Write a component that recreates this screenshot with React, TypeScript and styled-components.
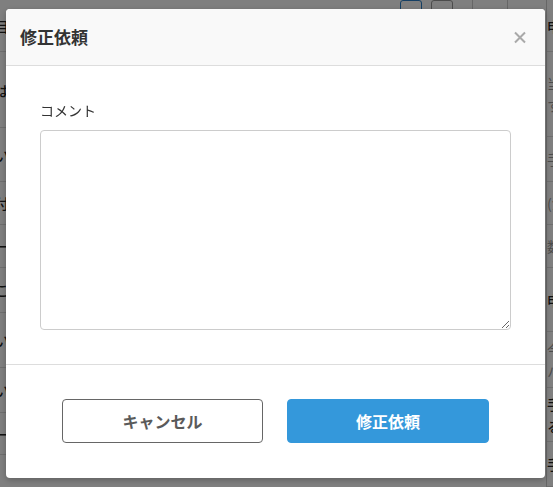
import React from "react";
import styled, { createGlobalStyle } from "styled-components";

const GlobalStyle = createGlobalStyle`
  html, body { margin: 0; padding: 0; }
  body {
    font-family: "Noto Sans CJK JP", "Noto Sans", sans-serif;
    color: #333;
    background: #fff;
  }
  * { box-sizing: border-box; }
`;

const Page = styled.div`
  display: flex;
  height: 487px;
  overflow: hidden;
  background: #fff;
`;

const SideCol = styled.div<{ $side: "left" | "right"; $w: number }>`
  width: ${(p) => p.$w}px;
  flex: none;
  display: flex;
  flex-direction: column;
  overflow: hidden;
  ${(p) => (p.$side === "left" ? "" : "border-left: 1px solid #ccc;")}
`;

const Row = styled.div<{ $h: number; $side: "left" | "right"; $dark?: boolean }>`
  height: ${(p) => p.$h}px;
  flex: none;
  display: flex;
  flex-direction: column;
  justify-content: center;
  align-items: ${(p) => (p.$side === "left" ? "flex-end" : "flex-start")};
  border-bottom: 1px solid #ddd;
  font-size: 14px;
  line-height: 22px;
  white-space: nowrap;
  color: ${(p) => (p.$dark ? "#222" : "#999")};
  font-weight: ${(p) => (p.$dark ? 500 : 400)};
`;

const Center = styled.div`
  flex: 1;
  display: flex;
  flex-direction: column;
`;

const TopBar = styled.div`
  height: 20px;
  display: flex;
  justify-content: flex-end;
  align-items: flex-end;
`;

const MiniBox = styled.div<{ $blue?: boolean }>`
  width: 22px;
  height: 20px;
  border: 1px solid ${(p) => (p.$blue ? "#2a7fc8" : "#999")};
  border-radius: 3px;
  margin-right: 9px;
`;

const TopCell = styled.div<{ $w: number; $gap?: number }>`
  width: ${(p) => p.$w}px;
  height: 20px;
  margin-left: ${(p) => p.$gap ?? 0}px;
  border-left: 1px solid #ccc;
`;

const Overlay = styled.div`
  position: fixed;
  inset: 0;
  background: rgba(0, 0, 0, 0.5);
  padding: 9px 0 0 6px;
`;

const Modal = styled.div`
  width: 539px;
  height: 469px;
  background: #fff;
  border-radius: 4px;
  overflow: hidden;
  display: flex;
  flex-direction: column;
  box-shadow: 0 2px 6px rgba(0, 0, 0, 0.25);
`;

const Header = styled.div`
  height: 57px;
  flex: none;
  display: flex;
  align-items: center;
  justify-content: space-between;
  padding: 0 19px 0 14px;
  background: #f9f9f9;
  border-bottom: 1px solid #ddd;
`;

const Title = styled.h2`
  margin: 0;
  font-size: 17px;
  font-weight: 700;
  color: #333;
  line-height: 24px;
`;

const CloseButton = styled.button`
  width: 12px;
  height: 13px;
  padding: 0;
  border: none;
  background: none;
  display: flex;
  cursor: pointer;
`;

const Body = styled.div`
  height: 299px;
  flex: none;
  padding: 34px 34px 0 34px;
  border-bottom: 1px solid #ddd;
  display: flex;
  flex-direction: column;
`;

const Label = styled.label`
  font-size: 14px;
  line-height: 20px;
  color: #333;
  margin-bottom: 10px;
`;

const TextArea = styled.textarea`
  width: 471px;
  height: 200px;
  flex: none;
  border: 1px solid #ccc;
  border-radius: 4px;
  padding: 8px;
  font-family: inherit;
  font-size: 14px;
  outline: none;
`;

const Footer = styled.div`
  flex: 1;
  display: flex;
  justify-content: center;
  align-items: flex-start;
  gap: 24px;
  padding-top: 34px;
`;

const Button = styled.button<{ $primary?: boolean }>`
  width: ${(p) => (p.$primary ? 202 : 201)}px;
  height: 44px;
  border-radius: 4px;
  font-family: inherit;
  font-size: 16px;
  font-weight: 700;
  cursor: pointer;
  border: 1px solid ${(p) => (p.$primary ? "#3498db" : "#666")};
  background: ${(p) => (p.$primary ? "#3498db" : "#fff")};
  color: ${(p) => (p.$primary ? "#fff" : "#5a5a5a")};
`;

type RowData = { h: number; lines: string[]; dark?: boolean };

const leftRows: RowData[] = [
  { h: 52, lines: ["項目"], dark: true },
  { h: 76, lines: ["内容は"], dark: true },
  { h: 54, lines: ["ない"], dark: true },
  { h: 43, lines: ["添付"], dark: true },
  { h: 43, lines: ["ー"], dark: true },
  { h: 45, lines: ["こ"], dark: true },
  { h: 55, lines: ["ない"], dark: true },
  { h: 45, lines: ["ない"], dark: true },
  { h: 42, lines: ["ー"], dark: true },
  { h: 40, lines: [""] },
];

const rightRows: RowData[] = [
  { h: 52, lines: ["申請"], dark: true },
  { h: 85, lines: ["当該", "す"] },
  { h: 45, lines: ["手続"] },
  { h: 43, lines: ["(注"] },
  { h: 43, lines: ["数量"] },
  { h: 64, lines: ["申請"], dark: true },
  { h: 56, lines: ["今回", "ハ"] },
  { h: 54, lines: ["手続", "る"], dark: true },
  { h: 45, lines: ["手続"], dark: true },
];

const CloseIcon = () => (
  <svg width="12" height="13" viewBox="0 0 12 13">
    <path d="M1 1.5 L11 11.5 M11 1.5 L1 11.5" stroke="#a9a9a9" strokeWidth="2" />
  </svg>
);

export default function App() {
  return (
    <>
      <GlobalStyle />
      <Page>
        <SideCol $side="left" $w={9}>
          {leftRows.map((r, i) => (
            <Row key={i} $h={r.h} $side="left" $dark={r.dark}>
              {r.lines.map((l, j) => (
                <span key={j}>{l}</span>
              ))}
            </Row>
          ))}
        </SideCol>
        <Center>
          <TopBar>
            <MiniBox $blue />
            <MiniBox />
            <TopCell $w={35} $gap={10} />
            <TopCell $w={39} />
          </TopBar>
        </Center>
        <SideCol $side="right" $w={7}>
          {rightRows.map((r, i) => (
            <Row key={i} $h={r.h} $side="right" $dark={r.dark}>
              {r.lines.map((l, j) => (
                <span key={j}>{l}</span>
              ))}
            </Row>
          ))}
        </SideCol>
      </Page>
      <Overlay>
        <Modal role="dialog">
          <Header>
            <Title>修正依頼</Title>
            <CloseButton aria-label="閉じる">
              <CloseIcon />
            </CloseButton>
          </Header>
          <Body>
            <Label>コメント</Label>
            <TextArea />
          </Body>
          <Footer>
            <Button>キャンセル</Button>
            <Button $primary>修正依頼</Button>
          </Footer>
        </Modal>
      </Overlay>
    </>
  );
}
